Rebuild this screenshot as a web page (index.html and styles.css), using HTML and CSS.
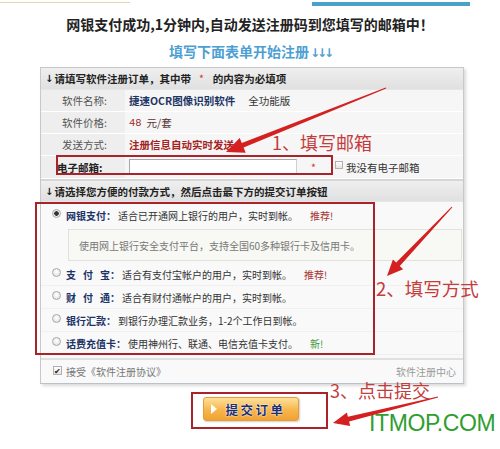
FILE: index.html
```html
<!DOCTYPE html>
<html lang="zh-CN">
<head>
<meta charset="utf-8">
<title>软件注册</title>
<link rel="stylesheet" href="styles.css">
</head>
<body>
<div class="page">
  <div class="topbar"><span class="tan"></span><span class="blue"></span></div>
  <h1 class="headline">网银支付成功,1分钟内,自动发送注册码到您填写的邮箱中！</h1>
  <h2 class="sub">填写下面表单开始注册<span class="arr">↓↓↓</span></h2>

  <div class="panel">
    <div class="phead"><span class="darr">↓</span>请填写软件注册订单，其中带 <span class="req">*</span> 的内容为必填项</div>
    <div class="row"><div class="lab">软件名称:</div><div class="val"><b class="prod">捷速OCR图像识别软件</b><span class="ed">全功能版</span></div></div>
    <div class="row"><div class="lab">软件价格:</div><div class="val"><span class="price">48</span><span class="unit">元/套</span></div></div>
    <div class="row"><div class="lab">发送方式:</div><div class="val"><b class="send">注册信息自动实时发送</b></div></div>
    <div class="row email"><div class="lab">电子邮箱:</div><div class="val"><span class="input"></span><span class="star">*</span><span class="cb"></span><span class="noemail">我没有电子邮箱</span></div></div>

    <div class="phead second"><span class="darr">↓</span>请选择您方便的付款方式，然后点击最下方的提交订单按钮</div>
    <div class="pay">
      <div class="opt first"><span class="radio on"></span><b class="pl">网银支付：</b>适合已开通网上银行的用户，实时到帐。<span class="rec">推荐!</span></div>
      <div class="info">使用网上银行安全支付平台，支持全国60多种银行卡及信用卡。</div>
      <div class="opt"><span class="radio"></span><b class="pl"><span class="sp">支付</span>宝：</b>适合有支付宝帐户的用户，实时到帐。<span class="rec">推荐!</span></div>
      <div class="opt"><span class="radio"></span><b class="pl"><span class="sp">财付</span>通：</b>适合有财付通帐户的用户，实时到帐。</div>
      <div class="opt"><span class="radio"></span><b class="pl">银行汇款：</b>到银行办理汇款业务，1-2个工作日到帐。</div>
      <div class="opt"><span class="radio"></span><b class="pl">话费充值卡：</b>使用神州行、联通、电信充值卡支付。<span class="new">新!</span></div>
    </div>
    <div class="foot"><span class="cb checked">✔</span><span class="agree">接受《软件注册协议》</span><span class="center">软件注册中心</span></div>
  </div>

  <div class="submitwrap"><button class="submit" type="button"><span class="tri"></span>提交订单</button></div>

  <div class="mark box1"></div>
  <div class="mark box2"></div>
  <div class="mark box3"></div>
  <div class="note n1">1、填写邮箱</div>
  <div class="note n2">2、填写方式</div>
  <div class="note n3">3、点击提交</div>
  <div class="logo">ITMOP.COM</div>
  <svg class="arrows" width="500" height="449" viewBox="0 0 500 449">
    <polygon points="386.2,88.5 243.6,147.6 245.7,152.7 226,152 239.7,137.9 241.8,143.0 385.8,87.5"/>
    <polygon points="452.4,207.3 399.8,266.1 403.1,269.2 387,276 392.9,259.6 396.2,262.6 451.6,206.7"/>
    <polygon points="438.1,397.5 349.1,421.6 350.2,426.0 333,423 346.9,412.4 347.9,416.7 437.9,396.5"/>
  </svg>
</div>
</body>
</html>
```

FILE: styles.css
```css
* { box-sizing: border-box; }
body {
  margin: 0;
  background: #fff;
  font-family: "Noto Sans CJK SC", "Noto Sans", sans-serif;
  color: #333;
}
.page {
  position: relative;
  width: 500px;
  height: 449px;
  overflow: hidden;
}
.topbar {
  display: flex;
  justify-content: space-between;
  align-items: flex-start;
  height: 8px;
  padding-top: 2px;
}
.tan { width: 130px; height: 1px; background: #e3d3b5; }
.blue { width: 158px; height: 4px; background: #4aa2c8; margin-right: 30px; }
.headline {
  margin: 6px 0 0;
  font-size: 14px;
  line-height: 20px;
  text-align: center;
  font-weight: bold;
  color: #222;
}
.sub {
  margin: 7px 0 0;
  font-size: 14px;
  line-height: 20px;
  text-align: center;
  font-weight: bold;
  color: #4d9fd3;
}
.sub .arr { font-family: "DejaVu Sans", sans-serif; font-weight: bold; font-size: 12px; letter-spacing: -3px; margin-left: 1px; }

.panel {
  margin: 4px 0 0 40px;
  width: 424px;
  border: 1px solid #c8c8c8;
  border-bottom-color: #b9c1c9;
  box-shadow: 2px 2px 3px rgba(0,0,0,.15);
  background: #f8f8f8;
  font-size: 10.5px;
}
.phead {
  height: 22px;
  display: flex;
  align-items: center;
  padding-left: 4px;
  font-weight: bold;
  color: #222;
  background: linear-gradient(#efefef, #e0e0e0);
  border-bottom: 1px solid #e6e6e6;
}
.phead.second { border-top: 2px solid #d6d6d6; height: 23px; }
.darr { font-family: "DejaVu Sans", sans-serif; font-size: 10px; margin-right: 1px; }
.req { color: #d33; font-weight: normal; margin: 0 9px 0 8px; }

.row {
  display: flex;
  height: 22px;
  border-bottom: 1px solid #fff;
}
.row.email { height: 23px; }
.lab {
  width: 84px;
  background: #eeeeee;
  padding-left: 21px;
  display: flex;
  align-items: center;
  color: #555;
}
.email .lab { padding-left: 16px; color: #222; font-weight: bold; }
.val {
  flex: 1;
  background: #f6f6f6;
  padding-left: 4px;
  display: flex;
  align-items: center;
}
.prod { color: #1d3563; }
.ed { margin-left: 13px; color: #333; }
.price { font-family: "Liberation Mono", monospace; color: #a02828; margin-right: 5px; }
.unit { color: #553333; }
.send { color: #a52222; }
.input {
  width: 168px;
  height: 16px;
  background: #fff;
  border: 1px solid #a8a8a8;
  border-right-color: #d0d0d0;
  border-bottom-color: #d0d0d0;
}
.star { color: #d33; margin-left: 14px; width: 10px; }
.cb {
  width: 8px;
  height: 8px;
  border: 1px solid #b0b0b0;
  background: linear-gradient(#fff, #e4e4e4);
  margin-left: 14px;
  margin-right: 3px;
  margin-top: -4px;
  font-size: 8px;
  line-height: 7px;
  text-align: center;
  color: #222;
  overflow: hidden;
}
.noemail { color: #333; }

.pay {
  padding: 2px 0 3px;
  background: #f9f9f9;
  font-size: 10px;
}
.opt {
  height: 23px;
  display: flex;
  align-items: center;
  padding-left: 11px;
  color: #333;
  border-bottom: 1px solid #f0f0f0;
}
.opt.first { height: 22px; border-bottom: 0; }
.radio {
  width: 9px;
  height: 9px;
  border-radius: 50%;
  border: 1px solid #a8a8a8;
  background: radial-gradient(circle at 50% 40%, #fff, #dcdcdc);
  margin-right: 5px;
  flex: none;
  position: relative;
  top: -2px;
}
.radio.on { background: radial-gradient(circle, #333 0, #333 2px, #e6e6e6 2.5px, #fff); }
.pl { color: #1b3366; margin-right: 2px; }
.sp { letter-spacing: 7px; }
.rec { color: #a83333; margin-left: 12px; }
.new { color: #3a9a3a; margin-left: 12px; }
.info {
  margin: 3px 1px 2px 27px;
  height: 32px;
  border: 1px solid #e2e2dc;
  background: #f8f8f4;
  display: flex;
  align-items: center;
  padding-left: 10px;
  color: #777;
}

.foot {
  height: 25px;
  border-top: 2px solid #e0e0e0;
  display: flex;
  align-items: center;
  padding: 0 7px 0 12px;
  font-size: 10px;
  background: #f9f9f9;
}
.foot .cb { margin: -3px 4px 0 0; width: 9px; height: 9px; }
.agree { color: #777; }
.center { margin-left: auto; color: #999; }

.submitwrap {
  display: flex;
  justify-content: center;
  padding-top: 13px;
  padding-left: 1px;
}
.submit {
  width: 96px;
  height: 24px;
  border: 1px solid #e39c3a;
  border-radius: 3px;
  background: linear-gradient(#fde19a, #f7b54a 55%, #f2a232);
  box-shadow: 1px 1px 2px rgba(0,0,0,.2);
  display: flex;
  align-items: center;
  padding: 0 0 0 7px;
  font-family: "Noto Sans CJK SC", sans-serif;
  font-size: 12.5px;
  font-weight: bold;
  letter-spacing: 2.5px;
  color: #1c2f6e;
  text-shadow: 0 0 2px #fff, 0 0 1px #fff;
}
.tri {
  width: 0;
  height: 0;
  border-left: 6px solid #fff;
  border-top: 5px solid transparent;
  border-bottom: 5px solid transparent;
  margin-right: 9px;
}

.mark {
  position: absolute;
  border: 2px solid #a8232a;
  pointer-events: none;
}
.box1 { left: 56px; top: 155px; width: 277px; height: 20px; }
.box2 { left: 35px; top: 202px; width: 340px; height: 153px; }
.box3 { left: 191px; top: 392px; width: 137px; height: 37px; }

.note {
  position: absolute;
  font-size: 18px;
  line-height: 22px;
  color: #c43c3c;
  white-space: nowrap;
}
.n1 { left: 272px; top: 131px; }
.n2 { left: 376px; top: 277px; font-size: 18.5px; }
.n3 { left: 330px; top: 379px; }
.logo {
  position: absolute;
  left: 369px;
  top: 410px;
  font-family: "Liberation Sans", sans-serif;
  font-size: 23px;
  line-height: 26px;
  color: #2f9e2f;
  letter-spacing: -0.4px;
}
.arrows {
  position: absolute;
  left: 0;
  top: 0;
  fill: #d42020;
  pointer-events: none;
}
```
